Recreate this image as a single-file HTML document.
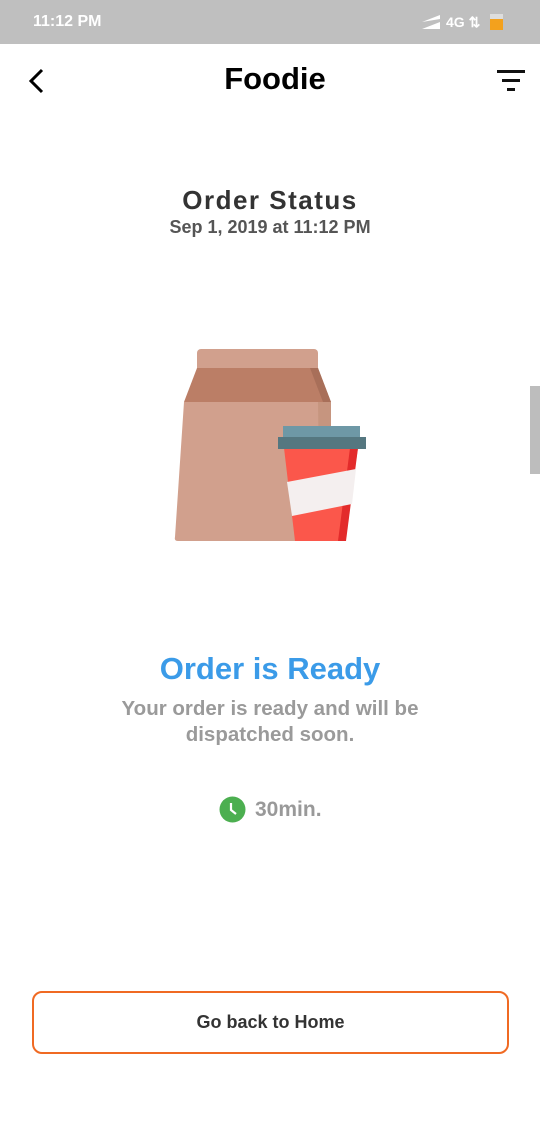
<!DOCTYPE html>
<html><head><style>
body{margin:0;width:540px;height:1123px;background:#fff;font-family:"Liberation Sans",sans-serif;position:relative;overflow:hidden}
.a{position:absolute}
.c{position:absolute;left:0;width:540px;text-align:center;font-weight:bold}
</style></head><body>
<div class="a" style="left:0;top:0;width:540px;height:44px;background:#bfbfbf"></div>
<div class="a" style="left:33px;top:13px;color:#fff;font-size:16px;font-weight:bold">11:12 PM</div>
<svg class="a" style="left:422px;top:14px" width="20" height="16"><path d="M0 8 L18 1 L18 5 Z M0 15 L18 8 L18 15 Z" fill="#fff"/></svg>
<div class="a" style="left:446px;top:14px;color:#fff;font-size:14px;font-weight:bold">4G ⇅</div>
<div class="a" style="left:490px;top:14px;width:13px;height:16px;background:#f3a11d;border-top:5px solid #ddd;box-sizing:border-box"></div>
<svg class="a" style="left:26px;top:68px" width="20" height="26"><path d="M16 2 L5 13 L16 24" stroke="#000" stroke-width="3" fill="none"/></svg>
<div class="c" style="top:61px;font-size:31px;color:#000;padding-left:10px;box-sizing:border-box">Foodie</div>
<div class="a" style="left:497px;top:70px;width:28px;height:3px;background:#111"></div>
<div class="a" style="left:502px;top:79px;width:18px;height:3px;background:#111"></div>
<div class="a" style="left:507px;top:88px;width:8px;height:3px;background:#111"></div>
<div class="c" style="top:185px;font-size:26px;color:#333;letter-spacing:1.5px">Order Status</div>
<div class="c" style="top:217px;font-size:18px;color:#555">Sep 1, 2019 at 11:12 PM</div>
<svg class="a" style="left:160px;top:340px" width="220" height="210">
<rect x="37" y="9" width="121" height="25" rx="4" fill="#d1a08d"/>
<path d="M37 28 L158 28 L171 62 L24 62 Z" fill="#bb7e66"/>
<path d="M150 28 L158 28 L171 62 L163 62 Z" fill="#a86f59"/>
<path d="M24 62 L171 62 L171 198 Q171 201 168 201 L18 201 Q14 201 15 197 Z" fill="#d1a08d"/>
<path d="M158 62 L171 62 L171 198 L160 200 Z" fill="#c6957f"/>
<path d="M124 108 L198 108 L184 201 L135 201 Z" fill="#fb574b"/>
<path d="M190 108 L198 108 L186 201 L178 201 Z" fill="#e32b2b"/>
<path d="M127 142 L196 129 L192 164 L132 176 Z" fill="#f4efef"/>
<rect x="123" y="86" width="77" height="12" fill="#6e98a6"/>
<rect x="118" y="97" width="88" height="12" fill="#557780"/>
</svg>
<div class="c" style="top:651px;font-size:31px;color:#3b9be8">Order is Ready</div>
<div class="c" style="top:696px;font-size:20.5px;color:#9a9a9a;line-height:26px">Your order is ready and will be<br>dispatched soon.</div>
<svg class="a" style="left:219px;top:796px" width="27" height="27"><circle cx="13.5" cy="13.5" r="13" fill="#4caf50"/><path d="M12 7 L12 14 L17 18" stroke="#fff" stroke-width="2.2" fill="none"/></svg>
<div class="a" style="left:255px;top:798px;font-size:21px;font-weight:bold;color:#999">30min.</div>
<div class="a" style="left:32px;top:991px;width:477px;height:63px;box-sizing:border-box;border:2px solid #f06a23;border-radius:10px;text-align:center;line-height:59px;font-size:18px;font-weight:bold;color:#333">Go back to Home</div>
<div class="a" style="left:530px;top:386px;width:10px;height:88px;background:#bdbdbd"></div>
</body></html>
